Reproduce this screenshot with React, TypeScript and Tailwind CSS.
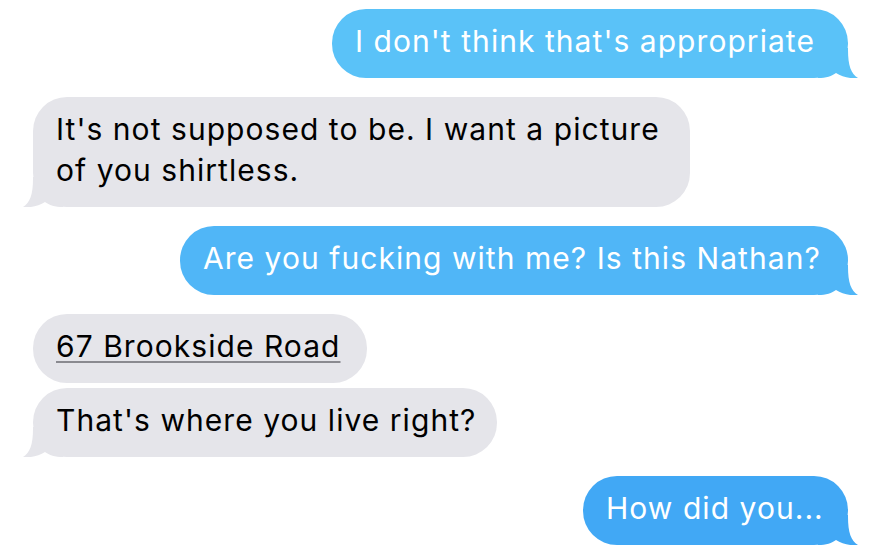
import React from 'react';

type Msg = {
  from: 'me' | 'them';
  lines: string[];
  box: string; // width + background
  fill: string; // tail colour
  tail?: boolean;
  link?: boolean;
  gap: string;
};

const messages: Msg[] = [
  { from: 'me', lines: ["I don't think that's appropriate"], box: 'w-[516px] bg-[#5ac2f8]', fill: 'fill-[#5ac2f8]', tail: true, gap: 'mt-0' },
  { from: 'them', lines: ["It's not supposed to be. I want a picture", 'of you shirtless.'], box: 'w-[657px] bg-[#e5e5ea]', fill: 'fill-[#e5e5ea]', tail: true, gap: 'mt-[19px]' },
  { from: 'me', lines: ['Are you fucking with me? Is this Nathan?'], box: 'w-[668px] bg-[#50b6f7]', fill: 'fill-[#50b6f7]', tail: true, gap: 'mt-[19px]' },
  { from: 'them', lines: ['67 Brookside Road'], box: 'w-[334px] bg-[#e5e5ea]', fill: 'fill-[#e5e5ea]', link: true, gap: 'mt-[19px]' },
  { from: 'them', lines: ["That's where you live right?"], box: 'w-[464px] bg-[#e5e5ea]', fill: 'fill-[#e5e5ea]', tail: true, gap: 'mt-[5px]' },
  { from: 'me', lines: ['How did you...'], box: 'w-[265px] bg-[#41a8f5]', fill: 'fill-[#41a8f5]', tail: true, gap: 'mt-[19px]' },
];

// little curled tail at the bottom corner of a bubble
const Tail = ({ side, fill }: { side: 'me' | 'them'; fill: string }) => (
  <svg
    width="40"
    height="30"
    viewBox="0 0 40 30"
    className={`${fill} ${side === 'me' ? 'absolute bottom-0 right-[-10px]' : 'absolute bottom-0 left-[-10px] -scale-x-100'}`}
  >
    <path d="M0 0 L30 0 L30 2 C30 17 33 26 40 30 C33 31 24 29 18 25 C14 28 8 30 0 30 Z" />
  </svg>
);

const Bubble = ({ m }: { m: Msg }) => {
  const me = m.from === 'me';
  return (
    <div
      className={`relative ${m.gap} ${m.box} ${me ? 'self-end text-white' : 'self-start text-black'} rounded-[34px] pl-[23px] pr-[20px] pt-[12px] pb-[16px]`}
    >
      {m.tail && <Tail side={m.from} fill={m.fill} />}
      <div className="relative whitespace-nowrap text-[30px] leading-[41px] tracking-[0.035em]">
        {m.lines.map((l, i) => (
          <div key={i}>
            {m.link ? (
              <span className="underline decoration-[#8a8a90] decoration-[1.5px] underline-offset-[4px]">{l}</span>
            ) : (
              l
            )}
          </div>
        ))}
      </div>
    </div>
  );
};

const App: React.FC = () => {
  return (
    <div className="w-[887px] h-[555px] overflow-hidden bg-white flex flex-col pt-[9px] pl-[33px] pr-[39px] font-['Inter','Noto_Sans',sans-serif]">
      {messages.map((m, i) => (
        <Bubble key={i} m={m} />
      ))}
    </div>
  );
};

export default App;
